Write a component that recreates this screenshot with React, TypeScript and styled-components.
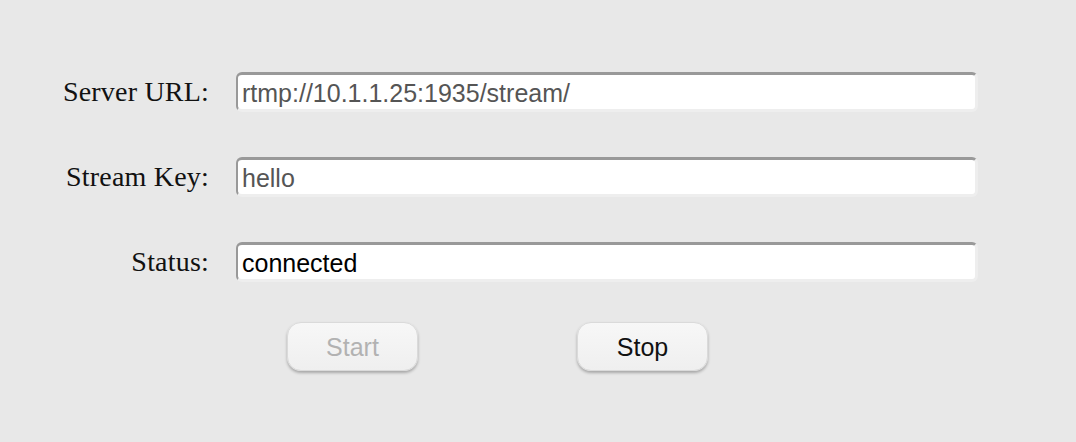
import * as React from 'react';
import styled, { createGlobalStyle } from 'styled-components';

const GlobalStyle = createGlobalStyle`
	html, body {
		margin: 0;
		padding: 0;
		background: #e8e8e8;
	}
	body {
		width: 1076px;
		height: 442px;
		overflow: hidden;
	}
`;

const Page = styled.div`
	padding-top: 72px;
	box-sizing: border-box;
	height: 442px;
	background: #e8e8e8;
`;

const Form = styled.div`
	display: grid;
	grid-template-columns: 209px 742px;
	column-gap: 27px;
	row-gap: 45px;
	align-items: center;
`;

const Label = styled.label`
	font-family: "Liberation Serif", "Times New Roman", serif;
	font-size: 28px;
	color: #111;
	text-align: right;
	letter-spacing: 0.2px;
	white-space: nowrap;
`;

const Field = styled.input<{ $muted?: boolean }>`
	box-sizing: border-box;
	width: 742px;
	height: 40px;
	margin: 0;
	padding: 2px 0 0 4px;
	border-style: solid;
	border-width: 3px 3px 3px 2px;
	border-color: #999 #eeeeee #eeeeee #999;
	border-radius: 6px;
	background: #fff;
	outline: none;
	font-family: "Liberation Sans", Arial, sans-serif;
	font-size: 25px;
	color: ${(p) => (p.$muted ? '#555' : '#000')};
`;

const ButtonRow = styled.div`
	grid-column: 2;
	display: flex;
	gap: 159px;
	padding-left: 51px;
	margin-top: -5px;
`;

const Button = styled.button`
	box-sizing: border-box;
	width: 131px;
	height: 49px;
	border: 1px solid #dadada;
	border-radius: 14px;
	background: linear-gradient(#f7f7f7, #efefef);
	box-shadow: 0 2px 3px rgba(0, 0, 0, 0.28);
	font-family: "Liberation Sans", Arial, sans-serif;
	font-size: 25px;
	color: #111;
	padding: 2px 0 0;
	&:disabled {
		color: #b2b2b2;
	}
`;

export default function App() {
	return (
		<>
			<GlobalStyle />
			<Page>
				<Form>
					<Label>Server URL:</Label>
					<Field $muted readOnly value={`rtmp://10.1.1.25:1935/stream/`} />
					<Label>Stream Key:</Label>
					<Field $muted readOnly value={`hello`} />
					<Label>Status:</Label>
					<Field readOnly value={`connected`} />
					<ButtonRow>
						<Button disabled>Start</Button>
						<Button>Stop</Button>
					</ButtonRow>
				</Form>
			</Page>
		</>
	);
}
